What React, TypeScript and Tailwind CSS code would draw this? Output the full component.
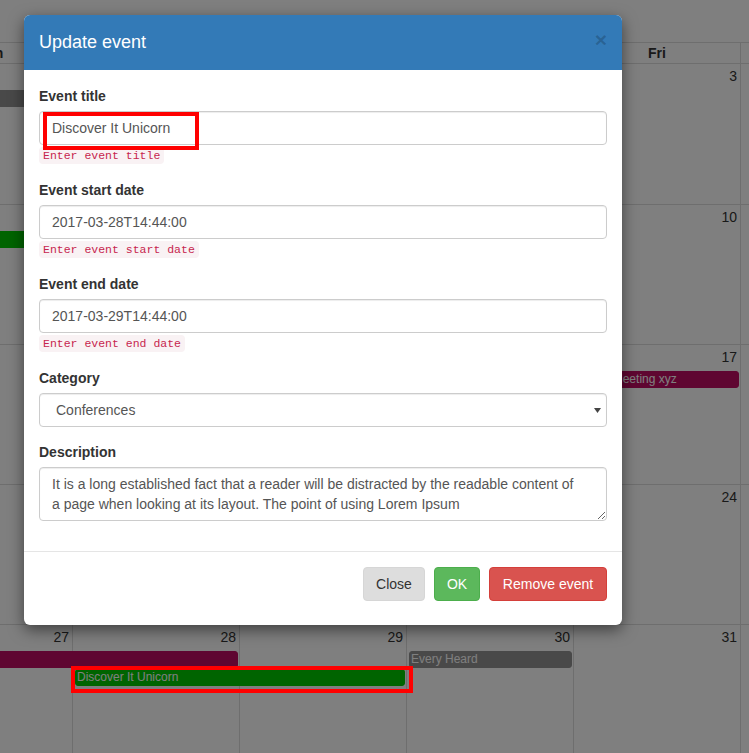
import React from 'react';

type CalEvent = { pos: string; color: string; title: string; time?: string };
type Week = { dates: number[]; h: string; events: CalEvent[] };

const days = ['Mon', 'Tue', 'Wed', 'Thu', 'Fri', 'Sat', 'Sun'];

const weeks: Week[] = [
  {
    dates: [27, 28, 1, 2, 3, 4, 5],
    h: 'h-[141px]',
    events: [{ pos: 'col-start-1 col-span-2 row-start-2', color: 'bg-[#929292] border-[#929292]', title: 'All Day Event' }],
  },
  {
    dates: [6, 7, 8, 9, 10, 11, 12],
    h: 'h-[140px]',
    events: [{ pos: 'col-start-1 col-span-1 row-start-2', color: 'bg-[#00c800] border-[#00c800]', title: 'Conference' }],
  },
  {
    dates: [13, 14, 15, 16, 17, 18, 19],
    h: 'h-[140px]',
    events: [
      { pos: 'col-start-5 col-span-1 row-start-2', color: 'bg-[#be0c62] border-[#be0c62]', title: 'Meeting xyz', time: '2:30p' },
    ],
  },
  { dates: [20, 21, 22, 23, 24, 25, 26], h: 'h-[140px]', events: [] },
  {
    dates: [27, 28, 29, 30, 31, 1, 2],
    h: 'h-[140px]',
    events: [
      { pos: 'col-start-1 col-span-2 row-start-2 !ml-0 !rounded-l-none', color: 'bg-[#be0c62] border-[#be0c62]', title: '' },
      { pos: 'col-start-4 col-span-1 row-start-2', color: 'bg-[#929292] border-[#929292]', title: 'Every Heard' },
      { pos: 'col-start-2 col-span-2 row-start-3', color: 'bg-[#00c800] border-[#00c800]', title: 'Discover It Unicorn' },
    ],
  },
];

function Calendar() {
  return (
    <div className="mt-[42px] ml-[-95px] w-[1169px]">
      {/* day names */}
      <div className="grid h-[22px] grid-cols-[repeat(7,167px)] border-y border-[#ddd]">
        {days.map((d) => (
          <div key={d} className="border-l border-[#ddd] text-center font-bold leading-[20px]">
            {d}
          </div>
        ))}
      </div>

      {weeks.map((w, i) => (
        <div key={i} className={`relative border-b border-[#ddd] ${w.h}`}>
          {/* cell borders */}
          <div className="absolute inset-0 grid grid-cols-[repeat(7,167px)]">
            {days.map((d) => (
              <div key={d} className="border-l border-[#ddd]" />
            ))}
          </div>
          {/* numbers + events */}
          <div className="relative grid grid-cols-[repeat(7,167px)] grid-rows-[26px] auto-rows-[18px]">
            {w.dates.map((n, j) => (
              <div key={j} className="row-start-1 pr-[3px] pt-[2px] text-right leading-[20px]">
                {n}
              </div>
            ))}
            {w.events.map((e, k) => (
              <div
                key={k}
                className={`ml-[3px] mr-[1px] h-[17px] overflow-hidden whitespace-nowrap rounded-[3px] border px-[1px] text-[12px] leading-[15px] text-white ${e.color} ${e.pos}`}
              >
                {e.time && <span className="font-bold">{e.time} </span>}
                {e.title}
              </div>
            ))}
          </div>
        </div>
      ))}
    </div>
  );
}

function Field({ label, value, hint }: { label: string; value: string; hint: string }) {
  return (
    <div className="mb-[16px]">
      <label className="mb-[5px] block font-bold leading-[20px]">{label}</label>
      <input
        readOnly
        defaultValue={value}
        className="block h-[34px] w-full rounded-[4px] border border-[#ccc] bg-white px-[12px] text-[14px] text-[#555] shadow-[inset_0_1px_1px_rgba(0,0,0,0.075)] outline-none"
      />
      <div className="mt-[2px] flex h-[17px] items-start">
        <code className="rounded-[4px] bg-[#f9f2f4] px-[4px] py-[2px] font-['Liberation_Mono',monospace] text-[11.5px] leading-[13px] text-[#c7254e]">
          {hint}
        </code>
      </div>
    </div>
  );
}

export default function App() {
  return (
    <div className="relative h-[753px] w-[749px] overflow-hidden bg-white font-['Liberation_Sans',Arial,sans-serif] text-[14px] text-[#333]">
      <Calendar />

      {/* backdrop */}
      <div className="absolute inset-0 bg-black/50" />

      {/* modal */}
      <div className="absolute left-[24px] top-[15px] w-[598px] overflow-hidden rounded-[6px] bg-white shadow-[0_5px_15px_rgba(0,0,0,0.5)]">
        <div className="flex h-[55px] items-start justify-between bg-[#337ab7] px-[15px] pt-[15px]">
          <h4 className="text-[18px] leading-[25px] text-white">Update event</h4>
          <button className="mt-[-1px] text-[21px] font-bold leading-none text-black/20">×</button>
        </div>

        <div className="px-[15px] pb-[15px] pt-[16px]">
          <Field label="Event title" value="Discover It Unicorn" hint="Enter event title" />
          <Field label="Event start date" value="2017-03-28T14:44:00" hint="Enter event start date" />
          <Field label="Event end date" value="2017-03-29T14:44:00" hint="Enter event end date" />

          <div className="mb-[15px]">
            <label className="mb-[5px] block font-bold leading-[20px]">Category</label>
            <div className="relative">
              <select
                defaultValue="Conferences"
                className="block h-[34px] w-full appearance-none rounded-[4px] border border-[#ccc] bg-white pl-[16px] text-[14px] text-[#555] shadow-[inset_0_1px_1px_rgba(0,0,0,0.075)] outline-none"
              >
                <option>Conferences</option>
                <option>Meetings</option>
              </select>
              <svg className="absolute right-[6px] top-[15px] h-[5px] w-[7px]" viewBox="0 0 7 5">
                <path d="M0 0h7L3.5 5z" fill="#444" />
              </svg>
            </div>
          </div>

          <div className="mb-[15px]">
            <label className="mb-[5px] block font-bold leading-[20px]">Description</label>
            <textarea
              readOnly
              defaultValue="It is a long established fact that a reader will be distracted by the readable content of a page when looking at its layout. The point of using Lorem Ipsum"
              className="block h-[54px] w-full resize-y rounded-[4px] border border-[#ccc] py-[6px] pl-[12px] pr-[24px] text-[14px] leading-[20px] text-[#555] shadow-[inset_0_1px_1px_rgba(0,0,0,0.075)] outline-none"
            />
          </div>
        </div>

        <div className="flex justify-end gap-[9px] border-t border-[#e5e5e5] px-[15px] pb-[24px] pt-[15px]">
          <button className="h-[34px] w-[62px] rounded-[4px] border border-[#d6d6d6] bg-[#ddd] leading-[20px] text-[#333]">Close</button>
          <button className="h-[34px] w-[46px] rounded-[4px] border border-[#4cae4c] bg-[#5cb85c] leading-[20px] text-white">OK</button>
          <button className="h-[34px] w-[118px] rounded-[4px] border border-[#d43f3a] bg-[#d9534f] leading-[20px] text-white">Remove event</button>
        </div>
      </div>

      {/* annotation boxes */}
      <div className="absolute left-[43px] top-[112px] h-[38px] w-[156px] border-4 border-[#ff0000]" />
      <div className="absolute left-[71px] top-[666px] h-[27px] w-[342px] border-4 border-[#ff0000]" />
    </div>
  );
}
